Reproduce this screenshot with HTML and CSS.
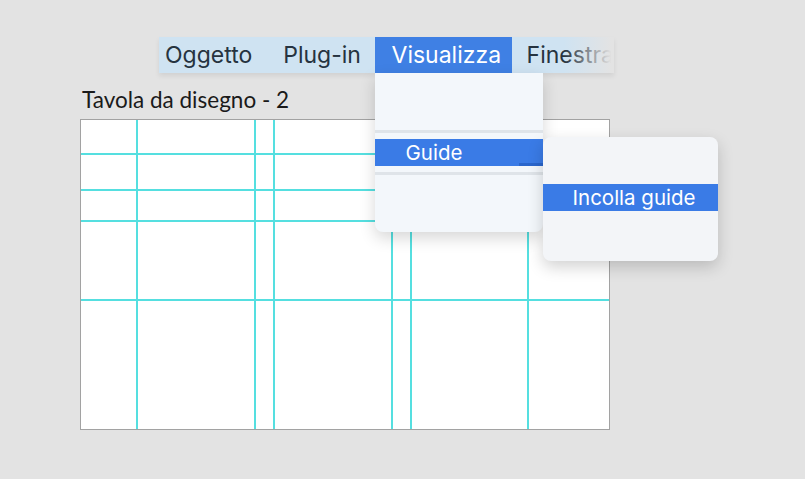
FILE: index.html
```html
<!DOCTYPE html>
<html lang="it">
<head>
<meta charset="utf-8">
<title>Guide</title>
<link rel="stylesheet" href="styles.css">
</head>
<body>
<div class="stage">
  <nav class="menubar">
    <div class="menu-item first">Oggetto</div>
    <div class="menu-item second">Plug-in</div>
    <div class="menu-item active">Visualizza
      <div class="dropdown">
        <div class="sep"></div>
        <div class="row hl main">Guide<span class="arrow"></span>
          <div class="submenu">
            <div class="row hl sub">Incolla guide</div>
          </div>
        </div>
        <div class="sep"></div>
      </div>
    </div>
    <div class="menu-item last">Finestra</div>
  </nav>
  <div class="board-title">Tavola da disegno - 2</div>
  <div class="board">
    <span class="guide v" style="left:55px"></span>
    <span class="guide v" style="left:173px"></span>
    <span class="guide v" style="left:192px"></span>
    <span class="guide v" style="left:310px"></span>
    <span class="guide v" style="left:329px"></span>
    <span class="guide v" style="left:446px"></span>
    <span class="guide h" style="top:33px"></span>
    <span class="guide h" style="top:69px"></span>
    <span class="guide h" style="top:100px"></span>
    <span class="guide h" style="top:179px"></span>
  </div>
</div>
</body>
</html>
```
FILE: styles.css
```css
html, body {
  margin: 0;
  padding: 0;
  background: #e3e3e3;
  width: 805px;
  height: 479px;
  overflow: hidden;
}
.stage {
  padding-top: 37px;
  font-family: "Inter", "Liberation Sans", sans-serif;
}
.menubar {
  display: flex;
  margin-left: 159px;
  width: 455px;
  height: 36px;
  background: #cfe3f2;
  box-shadow: 0 3px 5px rgba(0,0,0,0.08);
  position: relative;
  z-index: 2;
}
.menubar::after {
  content: "";
  position: absolute;
  right: 0;
  top: 0;
  width: 50px;
  height: 100%;
  background: linear-gradient(to right, rgba(227,227,227,0), #e3e3e3 95%);
}
.menu-item {
  position: relative;
  box-sizing: border-box;
  height: 36px;
  line-height: 36px;
  padding: 0 0 0 17px;
  font-size: 23px;
  color: #263340;
  white-space: nowrap;
}
.menu-item.first {
  padding-left: 6px;
  width: 108px;
}
.menu-item.second {
  width: 109px;
}
.menu-item.active {
  background: #3f80e4;
  color: #ffffff;
  width: 138px;
}
.menu-item.last {
  padding-left: 15px;
  flex: 1;
}
.dropdown {
  position: absolute;
  left: 0;
  top: 36px;
  width: 168px;
  height: 159px;
  padding-top: 57px;
  box-sizing: border-box;
  background: #f3f7fb;
  border-radius: 0 0 8px 8px;
  box-shadow: 0 6px 16px rgba(0,0,0,0.16);
}
.sep {
  height: 3px;
  background: #dfe4e9;
}
.row {
  height: 27px;
  line-height: 27px;
  font-size: 20.5px;
  color: #ffffff;
  position: relative;
}
.row.main {
  margin: 6px 0;
  padding-left: 31px;
}
.hl {
  background: #3a7be6;
}
.arrow {
  position: absolute;
  right: 0;
  bottom: 0;
  width: 24px;
  height: 3px;
  background: #2a66cc;
}
.submenu {
  position: absolute;
  left: 168px;
  top: -2px;
  width: 175px;
  height: 124px;
  padding-top: 47px;
  box-sizing: border-box;
  background: #f3f5f8;
  border-radius: 8px;
  box-shadow: 0 6px 16px rgba(0,0,0,0.18);
}
.row.sub {
  padding-left: 30px;
}
.board-title {
  margin: 13px 0 0 82px;
  height: 28px;
  line-height: 28px;
  font-family: "Lato", "Open Sans", sans-serif;
  font-size: 22.5px;
  color: #1a1a1a;
}
.board {
  position: relative;
  margin: 5px 0 0 80px;
  width: 528px;
  height: 309px;
  background: #ffffff;
  border: 1px solid #a2a2a2;
}
.guide {
  position: absolute;
  background: #55dfe0;
}
.guide.v {
  top: 0;
  bottom: 0;
  width: 2px;
}
.guide.h {
  left: 0;
  right: 0;
  height: 2px;
}
```
